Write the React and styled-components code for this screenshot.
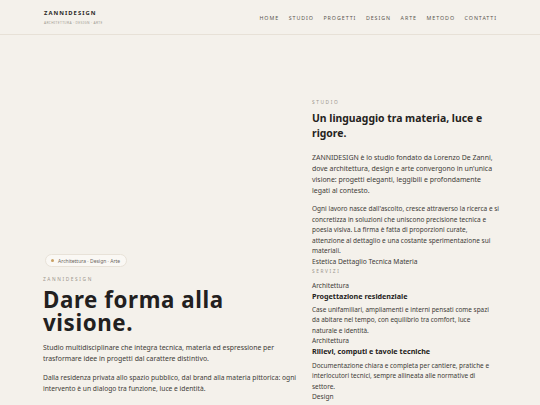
import React from 'react';
import styled, { createGlobalStyle } from 'styled-components';

const GlobalStyle = createGlobalStyle`
  * { box-sizing: border-box; }
  html, body {
    margin: 0;
    padding: 0;
    background: #f4f1eb;
    font-family: 'Noto Sans', 'DejaVu Sans', sans-serif;
    color: #2a2826;
  }
  p { margin: 0; }
`;

const navLinks = ['Home', 'Studio', 'Progetti', 'Design', 'Arte', 'Metodo', 'Contatti'];

const services = [
  {
    tag: 'Architettura',
    title: 'Progettazione residenziale',
    text: 'Case unifamiliari, ampliamenti e interni pensati come spazi da abitare nel tempo, con equilibrio tra comfort, luce naturale e identità.',
  },
  {
    tag: 'Architettura',
    title: 'Rilievi, computi e tavole tecniche',
    text: 'Documentazione chiara e completa per cantiere, pratiche e interlocutori tecnici, sempre allineata alle normative di settore.',
  },
  {
    tag: 'Design',
    title: 'Branding & Immaginazione',
    text: 'Identità visive e progetti grafici che traducono valori e visione in segni riconoscibili.',
  },
];

const App = () => {
  return (
    <Page>
      <GlobalStyle />
      <Header>
        <Bar>
          <Brand>
            <BrandName>ZanniDesign</BrandName>
            <BrandSub>Architettura · Design · Arte</BrandSub>
          </Brand>
          <Nav>
            {navLinks.map((link) => (
              <NavLink key={link} href='#'>
                {link}
              </NavLink>
            ))}
          </Nav>
        </Bar>
      </Header>

      <Main>
        <Hero>
          <Pill>
            <Dot />
            Architettura · Design · Arte
          </Pill>
          <Label $gap={9}>ZanniDesign</Label>
          <Headline>Dare forma alla visione.</Headline>
          <Lead>
            Studio multidisciplinare che integra tecnica, materia ed espressione per
            trasformare idee in progetti dal carattere distintivo.
          </Lead>
          <Small>
            Dalla residenza privata allo spazio pubblico, dal brand alla materia pittorica: ogni
            intervento è un dialogo tra funzione, luce e identità.
          </Small>
        </Hero>

        <Side>
          <Label>Studio</Label>
          <SideTitle>Un linguaggio tra materia, luce e rigore.</SideTitle>
          <Body>
            ZANNIDESIGN è lo studio fondato da Lorenzo De Zanni, dove architettura, design e
            arte convergono in un'unica visione: progetti eleganti, leggibili e profondamente
            legati al contesto.
          </Body>
          <BodySmall>
            Ogni lavoro nasce dall'ascolto, cresce attraverso la ricerca e si concretizza in
            soluzioni che uniscono precisione tecnica e poesia visiva. La firma è fatta di
            proporzioni curate, attenzione al dettaglio e una costante sperimentazione sui
            materiali.
          </BodySmall>
          <Values>Estetica Dettaglio Tecnica Materia</Values>
          <Label $gap={1}>Servizi</Label>
          <Services>
            {services.map((s) => (
              <Service key={s.title}>
                <ServiceTag>{s.tag}</ServiceTag>
                <ServiceTitle>{s.title}</ServiceTitle>
                <ServiceText>{s.text}</ServiceText>
              </Service>
            ))}
          </Services>
        </Side>
      </Main>
    </Page>
  );
};

export default App;

const Page = styled.div`
  height: 405px;
  overflow: hidden;
  background: #f4f1eb;
`;

const Header = styled.header`
  border-bottom: 1px solid #e7e1d7;
  background: #f4f1eb;
`;

const Bar = styled.div`
  width: 454px;
  margin: 0 auto;
  height: 34px;
  display: flex;
  align-items: center;
  justify-content: space-between;
`;

const Brand = styled.div`
  display: flex;
  flex-direction: column;
  gap: 3px;
  padding: 1px 0 0 1px;
`;

const BrandName = styled.div`
  font-size: 5.8px;
  font-weight: 700;
  letter-spacing: 1.05px;
  text-transform: uppercase;
  color: #2a2826;
  line-height: 7px;
`;

const BrandSub = styled.div`
  font-size: 3.3px;
  letter-spacing: 0.35px;
  text-transform: uppercase;
  color: #a29c93;
  line-height: 5px;
`;

const Nav = styled.nav`
  display: flex;
  align-items: center;
  gap: 9.6px;
  padding-top: 1px;
`;

const NavLink = styled.a`
  font-size: 5.3px;
  letter-spacing: 0.95px;
  text-transform: uppercase;
  color: #5a5650;
  text-decoration: none;
`;

const Main = styled.main`
  margin-left: 43px;
  width: 458px;
  display: grid;
  grid-template-columns: 256px 189px;
  column-gap: 13px;
  padding-top: 64px;
`;

const Hero = styled.section`
  padding-top: 155px;
  display: flex;
  flex-direction: column;
  align-items: flex-start;
`;

const Pill = styled.span`
  display: inline-flex;
  align-items: center;
  gap: 4px;
  height: 13px;
  padding: 0 6px 0 5px;
  margin-left: 2px;
  border-radius: 999px;
  background: #faf8f4;
  border: 1px solid #e8e2d8;
  font-size: 5px;
  color: #6b665f;
`;

const Dot = styled.span`
  width: 3px;
  height: 3px;
  border-radius: 50%;
  background: #c9a063;
`;

const Label = styled.div`
  font-size: 4.8px;
  letter-spacing: 1.6px;
  text-transform: uppercase;
  color: #9c968d;
  line-height: 6px;
  margin-top: ${(p) => p.$gap || 0}px;
`;

const Headline = styled.h1`
  margin: 6px 0 0;
  font-size: 22.3px;
  line-height: 23px;
  font-weight: 700;
  letter-spacing: 0.6px;
  color: #222020;
`;

const Lead = styled.p`
  margin-top: 8px;
  font-size: 6.9px;
  line-height: 11px;
  color: #3e3b37;
`;

const Small = styled.p`
  margin-top: 9px;
  font-size: 6.7px;
  line-height: 10.5px;
  color: #3e3b37;
`;

const Side = styled.section`
  display: flex;
  flex-direction: column;
`;

const SideTitle = styled.h2`
  margin: 6px 0 0;
  font-size: 10.4px;
  line-height: 15px;
  font-weight: 700;
  color: #242220;
`;

const Body = styled.p`
  margin-top: 11px;
  max-width: 186px;
  font-size: 6.95px;
  line-height: 11px;
  color: #3e3b37;
`;

const BodySmall = styled.p`
  margin-top: 8px;
  font-size: 6.5px;
  line-height: 10.5px;
  color: #3e3b37;
`;

const Values = styled.div`
  font-size: 6.7px;
  line-height: 10px;
  color: #3e3b37;
`;

const Services = styled.div`
  display: flex;
  flex-direction: column;
  margin-top: 7px;
`;

const Service = styled.div`
  display: flex;
  flex-direction: column;
`;

const ServiceTag = styled.div`
  font-size: 6.6px;
  line-height: 9px;
  color: #3e3b37;
`;

const ServiceTitle = styled.h3`
  margin: 1px 0 0;
  font-size: 7.2px;
  line-height: 11px;
  font-weight: 700;
  color: #242220;
`;

const ServiceText = styled.p`
  margin-top: 3.25px;
  max-width: 178px;
  font-size: 6.4px;
  line-height: 10.5px;
  color: #3e3b37;
`;
